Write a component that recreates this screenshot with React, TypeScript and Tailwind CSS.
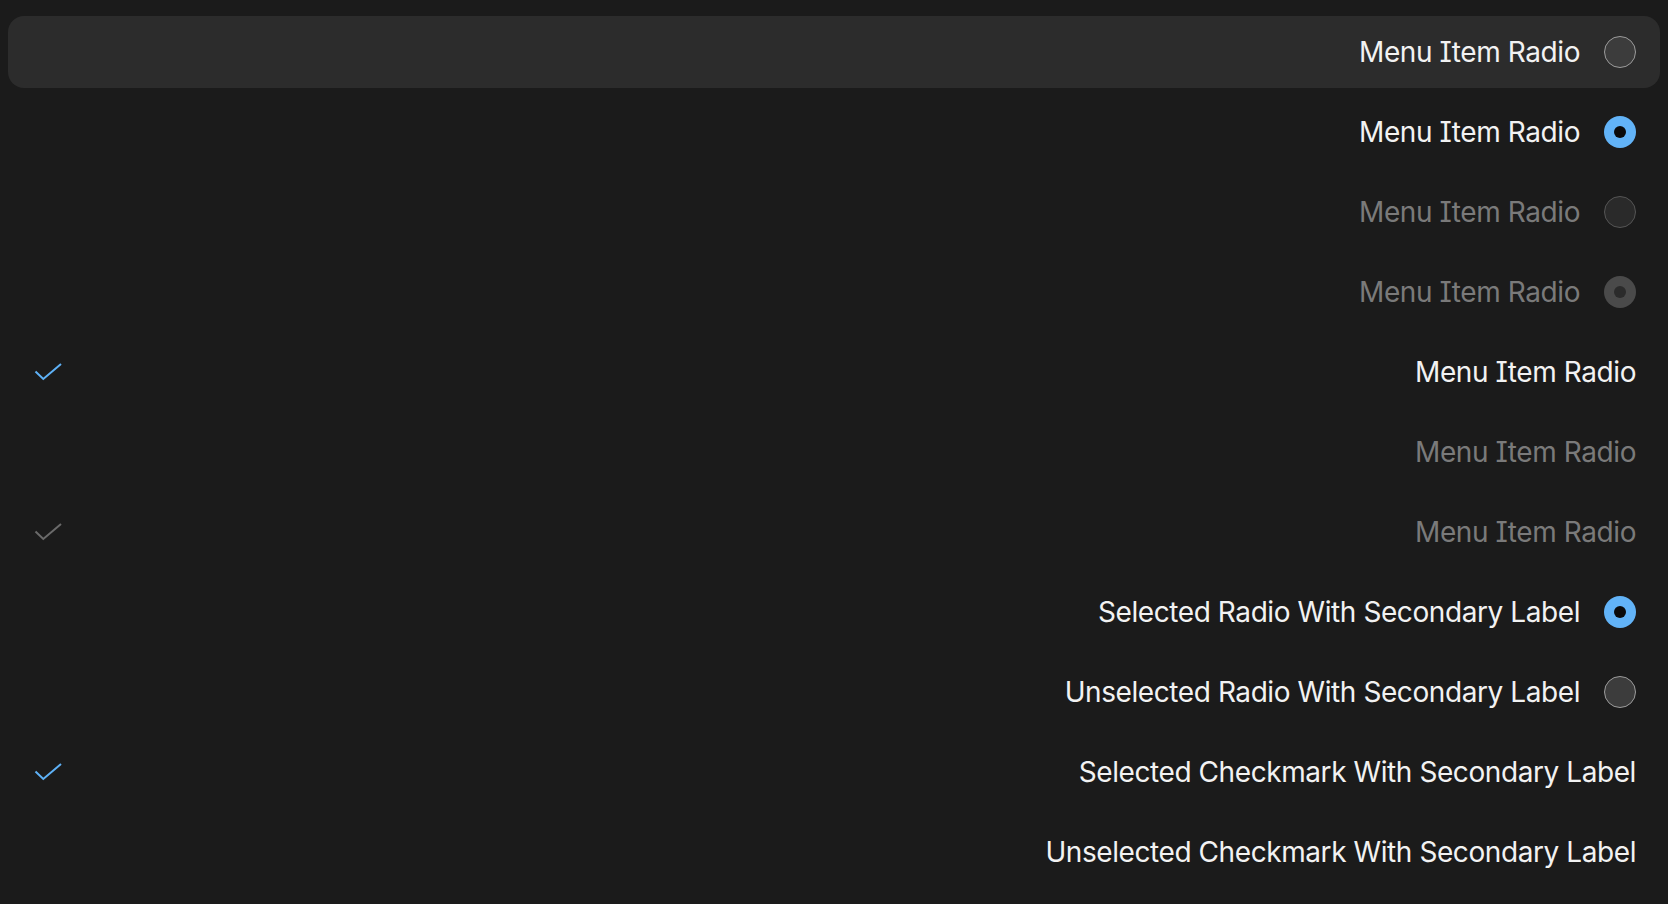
import React from "react";

type Row = {
  label: string;
  kind: "radio" | "check";
  selected: boolean;
  disabled?: boolean;
  highlighted?: boolean;
};

const rows: Row[] = [
  { label: "Menu Item Radio", kind: "radio", selected: false, highlighted: true },
  { label: "Menu Item Radio", kind: "radio", selected: true },
  { label: "Menu Item Radio", kind: "radio", selected: false, disabled: true },
  { label: "Menu Item Radio", kind: "radio", selected: true, disabled: true },
  { label: "Menu Item Radio", kind: "check", selected: true },
  { label: "Menu Item Radio", kind: "check", selected: false, disabled: true },
  { label: "Menu Item Radio", kind: "check", selected: true, disabled: true },
  { label: "Selected Radio With Secondary Label", kind: "radio", selected: true },
  { label: "Unselected Radio With Secondary Label", kind: "radio", selected: false },
  { label: "Selected Checkmark With Secondary Label", kind: "check", selected: true },
  { label: "Unselected Checkmark With Secondary Label", kind: "check", selected: false },
];

function Radio({ selected, disabled }: { selected: boolean; disabled?: boolean }) {
  if (selected && !disabled) {
    return (
      <div className="w-8 h-8 rounded-full bg-[#62b3f7] flex items-center justify-center shrink-0">
        <div className="w-3 h-3 rounded-full bg-[#0b0b0b]" />
      </div>
    );
  }
  if (selected && disabled) {
    return (
      <div className="w-8 h-8 rounded-full bg-[#4a4a4a] flex items-center justify-center shrink-0">
        <div className="w-3 h-3 rounded-full bg-[#2b2b2b]" />
      </div>
    );
  }
  if (disabled) {
    return <div className="w-8 h-8 rounded-full bg-[#2a2a2a] border-[1.5px] border-[#555555] shrink-0" />;
  }
  return <div className="w-8 h-8 rounded-full bg-[#3c3c3c] border-[1.5px] border-[#9c9c9c] shrink-0" />;
}

function Check({ color }: { color: string }) {
  return (
    <svg width="32" height="32" viewBox="0 0 32 32" fill="none" className="shrink-0">
      <path d="M3.5 15.5 L11.3 23 L29 8" stroke={color} strokeWidth="2" strokeLinecap="butt" strokeLinejoin="miter" />
    </svg>
  );
}

export default function App() {
  return (
    <div
      className="min-h-screen w-full bg-[#1b1b1b] px-2 pt-4 flex flex-col gap-2 [font-feature-settings:'cv08']"
      style={{ fontFamily: "Inter, 'Noto Sans', sans-serif" }}
    >
      {rows.map((r, i) => (
        <div
          key={i}
          className={`h-[72px] shrink-0 rounded-2xl flex items-center px-6 ${r.highlighted ? "bg-[#2c2c2c]" : ""}`}
        >
          <div className="w-8 h-8 shrink-0 flex items-center">
            {r.kind === "check" && r.selected ? (
              <Check color={r.disabled ? "#6a6a6a" : "#5eb1f6"} />
            ) : null}
          </div>
          <div className="flex-1" />
          <span
            className={`text-[28px] leading-none tracking-[-0.015em] ${r.disabled ? "text-[#7a7a7a]" : "text-[#f2f2f2]"}`}
          >
            {r.label}
          </span>
          {r.kind === "radio" ? (
            <div className="ml-6">
              <Radio selected={r.selected} disabled={r.disabled} />
            </div>
          ) : null}
        </div>
      ))}
    </div>
  );
}
